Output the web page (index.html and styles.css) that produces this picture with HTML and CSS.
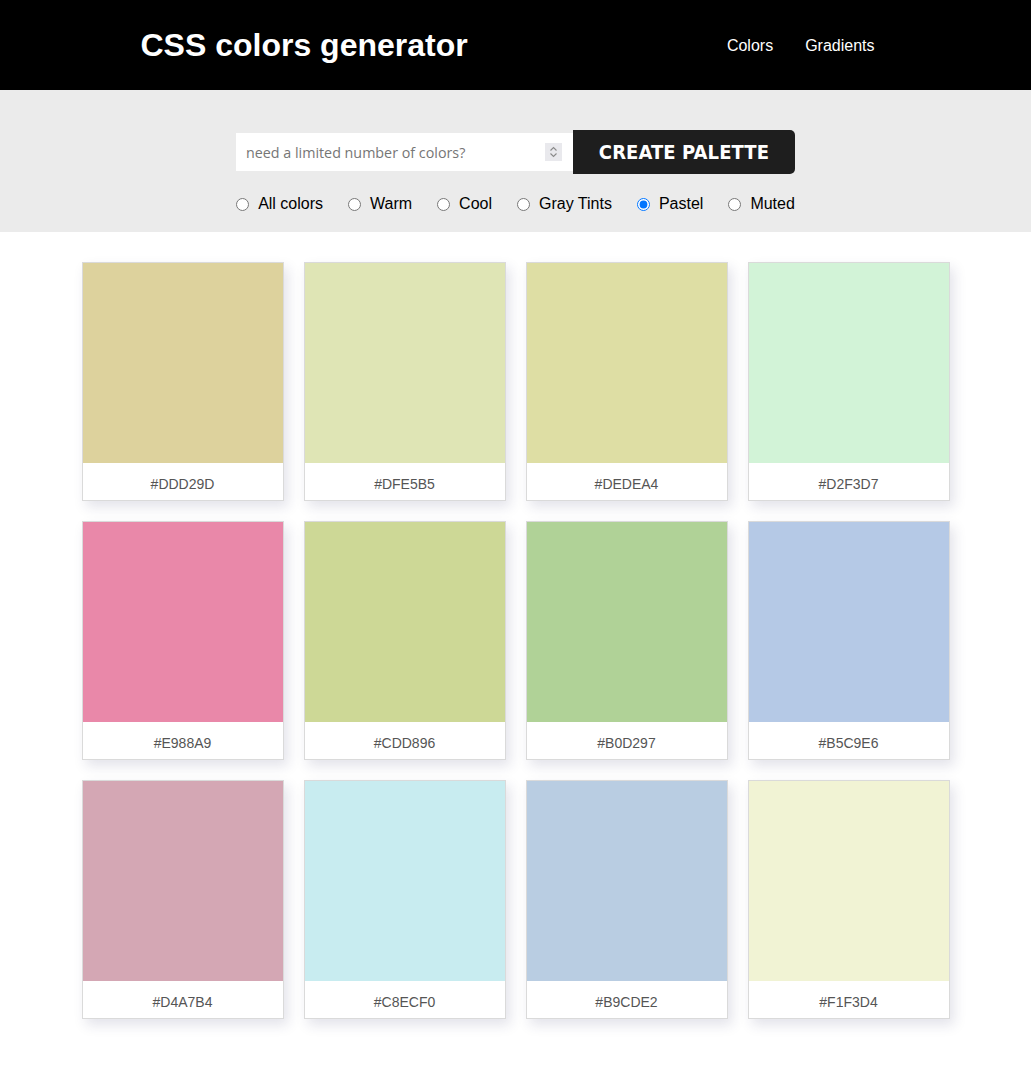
FILE: index.html
```html
<!DOCTYPE html>
<html lang="en">
<head>
<meta charset="utf-8">
<title>CSS colors generator</title>
<link rel="stylesheet" href="styles.css">
</head>
<body>
<header class="topbar">
  <div class="topbar-inner">
    <h1 class="brand">CSS colors generator</h1>
    <nav class="nav">
      <a class="nav-link" href="#">Colors</a>
      <a class="nav-link" href="#">Gradients</a>
    </nav>
  </div>
</header>
<section class="controls">
  <form class="create-form">
    <div class="field">
      <input class="count-input" type="number" placeholder="need a limited number of colors?">
      <span class="spinner" aria-hidden="true">
        <svg width="17" height="18" viewBox="0 0 17 18"><path d="M5.5 7.5 L8.5 4.5 L11.5 7.5" fill="none" stroke="#8a8a8a" stroke-width="1.1"/><path d="M5.5 10.5 L8.5 13.5 L11.5 10.5" fill="none" stroke="#8a8a8a" stroke-width="1.1"/></svg>
      </span>
    </div>
    <button class="create-btn" type="button">CREATE PALETTE</button>
  </form>
  <div class="filters">
    <label class="filter"><input type="radio" name="kind"><span>All colors</span></label>
    <label class="filter"><input type="radio" name="kind"><span>Warm</span></label>
    <label class="filter"><input type="radio" name="kind"><span>Cool</span></label>
    <label class="filter"><input type="radio" name="kind"><span>Gray Tints</span></label>
    <label class="filter"><input type="radio" name="kind" checked><span>Pastel</span></label>
    <label class="filter"><input type="radio" name="kind"><span>Muted</span></label>
  </div>
</section>
<main class="palette">
  <div class="card"><div class="swatch" style="background:#DDD29D"></div><div class="code">#DDD29D</div></div>
  <div class="card"><div class="swatch" style="background:#DFE5B5"></div><div class="code">#DFE5B5</div></div>
  <div class="card"><div class="swatch" style="background:#DEDEA4"></div><div class="code">#DEDEA4</div></div>
  <div class="card"><div class="swatch" style="background:#D2F3D7"></div><div class="code">#D2F3D7</div></div>
  <div class="card"><div class="swatch" style="background:#E988A9"></div><div class="code">#E988A9</div></div>
  <div class="card"><div class="swatch" style="background:#CDD896"></div><div class="code">#CDD896</div></div>
  <div class="card"><div class="swatch" style="background:#B0D297"></div><div class="code">#B0D297</div></div>
  <div class="card"><div class="swatch" style="background:#B5C9E6"></div><div class="code">#B5C9E6</div></div>
  <div class="card"><div class="swatch" style="background:#D4A7B4"></div><div class="code">#D4A7B4</div></div>
  <div class="card"><div class="swatch" style="background:#C8ECF0"></div><div class="code">#C8ECF0</div></div>
  <div class="card"><div class="swatch" style="background:#B9CDE2"></div><div class="code">#B9CDE2</div></div>
  <div class="card"><div class="swatch" style="background:#F1F3D4"></div><div class="code">#F1F3D4</div></div>
</main>
</body>
</html>
```
FILE: styles.css
```css
* { box-sizing: border-box; }
html, body { margin: 0; padding: 0; background: #fff; }
body { font-family: "Liberation Sans", Arial, sans-serif; color: #000; }

.topbar { background: #000; height: 90px; }
.topbar-inner {
  width: 750px; height: 90px; margin: 0 auto;
  display: flex; align-items: center; justify-content: space-between;
}
.brand { margin: 0; color: #fff; font-size: 32px; font-weight: bold; }
.nav { display: flex; padding-top: 2px; }
.nav-link { color: #fff; text-decoration: none; font-size: 16px; padding: 0 16px; }

.controls { background: #ebebeb; height: 142px; padding-top: 40px; }
.create-form { display: flex; justify-content: center; align-items: center; margin: 0; }
.field {
  width: 337px; height: 38px; background: #fff;
  display: flex; align-items: center; padding-right: 11px;
}
.count-input {
  flex: 1; min-width: 0; height: 38px; border: none; outline: none; background: transparent;
  padding: 0 10px; font-family: "Open Sans", "Noto Sans", sans-serif; font-size: 14.3px; color: #333;
  margin: 0; -moz-appearance: textfield;
}
.count-input::-webkit-inner-spin-button,
.count-input::-webkit-outer-spin-button { -webkit-appearance: none; margin: 0; }
.count-input::placeholder { color: #767676; }
.spinner { display: flex; width: 17px; height: 18px; background: #e9e9ed; }
.create-btn {
  width: 222px; height: 44px; border: none; margin: 0;
  background: #1e1e1e; color: #fff; border-radius: 0 5px 5px 0;
  font-family: "DejaVu Sans Condensed", "DejaVu Sans", sans-serif; font-weight: bold; font-size: 20px;
  letter-spacing: 0.1px;
}
.filters { display: flex; justify-content: center; gap: 25px; margin-top: 21px; }
.filter { display: flex; align-items: center; gap: 9px; font-size: 16px; }
.filter input { margin: 0; width: 13px; height: 13px; }

.palette {
  width: 868px; margin: 30px auto 58px;
  display: grid; grid-template-columns: repeat(4, 202px); gap: 20px;
}
.card {
  border: 1px solid #dadada; background: #fff;
  box-shadow: 4px 6px 12px rgba(40, 40, 90, 0.13);
}
.swatch { height: 200px; }
.code {
  height: 37px; padding-top: 4px;
  display: flex; align-items: center; justify-content: center;
  font-size: 14px; color: #555;
}
```
